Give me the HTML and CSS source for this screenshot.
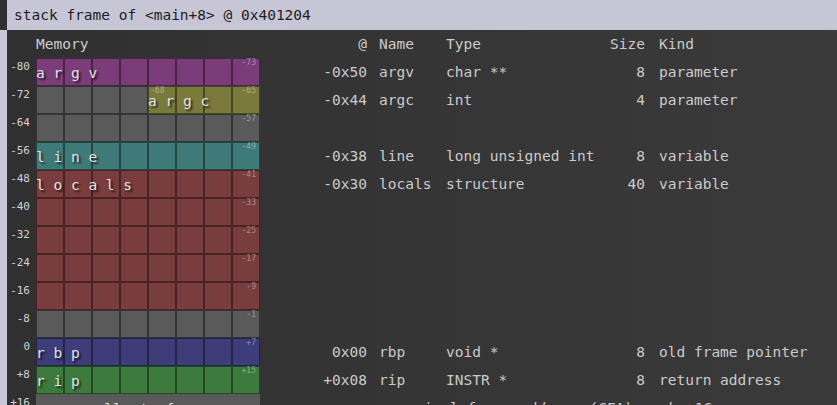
FILE: index.html
```html
<!DOCTYPE html>
<html>
<head>
<meta charset="utf-8">
<link rel="stylesheet" href="styles.css">
</head>
<body>
<div class="title">stack frame of &lt;main+8&gt; @ 0x401204</div>
<div class="main">
  <div class="row head">
    <div class="off"></div>
    <div class="memhead">Memory</div>
    <div class="at">@</div>
    <div class="name">Name</div>
    <div class="type">Type</div>
    <div class="size">Size</div>
    <div class="kind">Kind</div>
  </div>

  <div class="row">
    <div class="off">-80</div>
    <div class="mem">
      <div class="cells"><i class="c purple"></i><i class="c purple"></i><i class="c purple"></i><i class="c purple"></i><i class="c purple"></i><i class="c purple"></i><i class="c purple"></i><i class="c purple"></i></div>
      <span class="lbl">a r g v</span>
      <span class="tag">-73</span>
    </div>
    <div class="at">-0x50</div>
    <div class="name">argv</div>
    <div class="type">char **</div>
    <div class="size">8</div>
    <div class="kind">parameter</div>
  </div>

  <div class="row">
    <div class="off">-72</div>
    <div class="mem">
      <div class="cells"><i class="c gray"></i><i class="c gray"></i><i class="c gray"></i><i class="c gray"></i><i class="c olive"></i><i class="c olive"></i><i class="c olive"></i><i class="c olive"></i></div>
      <span class="lbl half">a r g c</span>
      <span class="tag start">-68</span>
      <span class="tag">-65</span>
    </div>
    <div class="at">-0x44</div>
    <div class="name">argc</div>
    <div class="type">int</div>
    <div class="size">4</div>
    <div class="kind">parameter</div>
  </div>

  <div class="row">
    <div class="off">-64</div>
    <div class="mem">
      <div class="cells"><i class="c gray"></i><i class="c gray"></i><i class="c gray"></i><i class="c gray"></i><i class="c gray"></i><i class="c gray"></i><i class="c gray"></i><i class="c gray"></i></div>
      <span class="tag">-57</span>
    </div>
  </div>

  <div class="row">
    <div class="off">-56</div>
    <div class="mem">
      <div class="cells"><i class="c teal"></i><i class="c teal"></i><i class="c teal"></i><i class="c teal"></i><i class="c teal"></i><i class="c teal"></i><i class="c teal"></i><i class="c teal"></i></div>
      <span class="lbl">l i n e</span>
      <span class="tag">-49</span>
    </div>
    <div class="at">-0x38</div>
    <div class="name">line</div>
    <div class="type">long unsigned int</div>
    <div class="size">8</div>
    <div class="kind">variable</div>
  </div>

  <div class="row">
    <div class="off">-48</div>
    <div class="mem">
      <div class="cells"><i class="c red"></i><i class="c red"></i><i class="c red"></i><i class="c red"></i><i class="c red"></i><i class="c red"></i><i class="c red"></i><i class="c red"></i></div>
      <span class="lbl">l o c a l s</span>
      <span class="tag">-41</span>
    </div>
    <div class="at">-0x30</div>
    <div class="name">locals</div>
    <div class="type">structure</div>
    <div class="size">40</div>
    <div class="kind">variable</div>
  </div>

  <div class="row">
    <div class="off">-40</div>
    <div class="mem">
      <div class="cells"><i class="c red"></i><i class="c red"></i><i class="c red"></i><i class="c red"></i><i class="c red"></i><i class="c red"></i><i class="c red"></i><i class="c red"></i></div>
      <span class="tag">-33</span>
    </div>
  </div>

  <div class="row">
    <div class="off">-32</div>
    <div class="mem">
      <div class="cells"><i class="c red"></i><i class="c red"></i><i class="c red"></i><i class="c red"></i><i class="c red"></i><i class="c red"></i><i class="c red"></i><i class="c red"></i></div>
      <span class="tag">-25</span>
    </div>
  </div>

  <div class="row">
    <div class="off">-24</div>
    <div class="mem">
      <div class="cells"><i class="c red"></i><i class="c red"></i><i class="c red"></i><i class="c red"></i><i class="c red"></i><i class="c red"></i><i class="c red"></i><i class="c red"></i></div>
      <span class="tag">-17</span>
    </div>
  </div>

  <div class="row">
    <div class="off">-16</div>
    <div class="mem">
      <div class="cells"><i class="c red"></i><i class="c red"></i><i class="c red"></i><i class="c red"></i><i class="c red"></i><i class="c red"></i><i class="c red"></i><i class="c red"></i></div>
      <span class="tag">-9</span>
    </div>
  </div>

  <div class="row">
    <div class="off">-8</div>
    <div class="mem">
      <div class="cells"><i class="c gray"></i><i class="c gray"></i><i class="c gray"></i><i class="c gray"></i><i class="c gray"></i><i class="c gray"></i><i class="c gray"></i><i class="c gray"></i></div>
      <span class="tag">-1</span>
    </div>
  </div>

  <div class="row">
    <div class="off">0</div>
    <div class="mem">
      <div class="cells"><i class="c blue"></i><i class="c blue"></i><i class="c blue"></i><i class="c blue"></i><i class="c blue"></i><i class="c blue"></i><i class="c blue"></i><i class="c blue"></i></div>
      <span class="lbl">r b p</span>
      <span class="tag">+7</span>
    </div>
    <div class="at">0x00</div>
    <div class="name">rbp</div>
    <div class="type">void *</div>
    <div class="size">8</div>
    <div class="kind">old frame pointer</div>
  </div>

  <div class="row">
    <div class="off">+8</div>
    <div class="mem">
      <div class="cells"><i class="c green"></i><i class="c green"></i><i class="c green"></i><i class="c green"></i><i class="c green"></i><i class="c green"></i><i class="c green"></i><i class="c green"></i></div>
      <span class="lbl">r i p</span>
      <span class="tag">+15</span>
    </div>
    <div class="at">+0x08</div>
    <div class="name">rip</div>
    <div class="type">INSTR *</div>
    <div class="size">8</div>
    <div class="kind">return address</div>
  </div>

  <div class="row">
    <div class="off">+16</div>
    <div class="mem caller">
      <span class="lbl center">↓  caller's frame  ↓</span>
    </div>
    <div class="at"></div>
    <div class="cfa">canonical frame address (CFA)</div>
    <div class="kind cfa-val">rbp+16</div>
  </div>
</div>
</body>
</html>
```

FILE: styles.css
```css
html, body {
  margin: 0;
  height: 405px;
  overflow: hidden;
}

body {
  background: linear-gradient(to right, #303030, #3a3a3a);
  font-family: "DejaVu Sans Mono", monospace;
  font-size: 14.5px;
  color: #cbcbcb;
}

.title {
  margin-left: 7px;
  height: 30px;
  line-height: 30px;
  padding-left: 7px;
  background: #c6c6d6;
  color: #1e1e22;
  white-space: pre;
}

.main {
  border-left: 7px solid #c6c6d6;
}

.row {
  display: grid;
  grid-template-columns: 29px 224px 107px 79px 154px 45px 1fr;
  height: 28px;
  line-height: 28px;
  white-space: pre;
}

.off {
  font-size: 11px;
  line-height: 18px;
  text-align: right;
  padding-right: 6px;
  color: #d2d2d2;
}

.at { text-align: right; }
.name { padding-left: 12px; }
.size { text-align: right; }
.kind { padding-left: 14px; }

.cfa {
  grid-column: 4 / span 3;
  padding-left: 12px;
  font-style: italic;
}
.cfa-val { font-style: italic; }

.mem {
  display: grid;
  grid-template-columns: 224px;
  grid-template-rows: 28px;
}

.mem > * {
  grid-area: 1 / 1;
}

.cells {
  display: flex;
}

.c {
  box-sizing: border-box;
  width: 28px;
  height: 28px;
  border: 1px solid rgba(0, 0, 0, 0.42);
}

.purple { background: #7a3d7a; }
.gray { background: #5a5a5a; }
.olive { background: #7a7a3c; }
.teal { background: #3d7a78; }
.red { background: #7a3d3d; }
.blue { background: #3d3d7a; }
.green { background: #3d7a3d; }

.caller { background: #5a5a5a; }

.lbl {
  color: #e2e2e2;
  line-height: 28px;
  padding-top: 1px;
  text-shadow: 2px 2px 2px rgba(0, 0, 0, 0.7);
}

.lbl.half { margin-left: 112px; }
.lbl.center { justify-self: center; }

.tag {
  font-size: 8px;
  line-height: 9px;
  justify-self: end;
  align-self: start;
  margin-right: 4px;
  color: rgba(255, 255, 255, 0.4);
}

.tag.start {
  justify-self: start;
  margin-left: 114px;
  margin-right: 0;
}
```
